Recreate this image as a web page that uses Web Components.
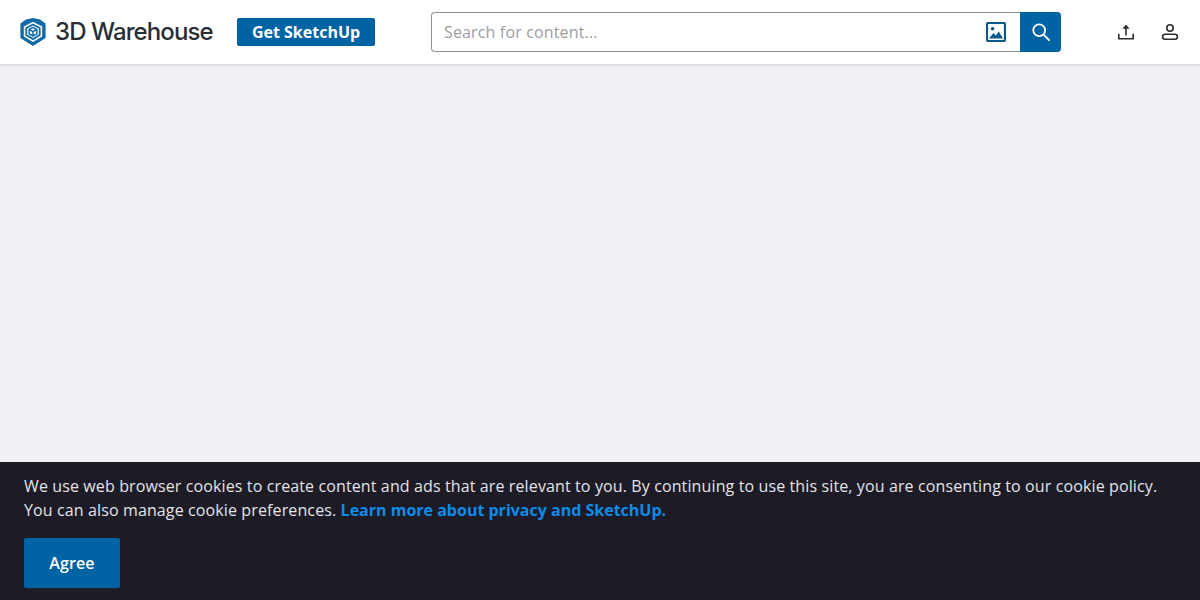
<!DOCTYPE html>
<html lang="en">
<head>
<meta charset="utf-8">
<title>3D Warehouse</title>
<style>
  html, body { margin: 0; height: 100%; }
  body { font-family: "Open Sans", sans-serif; background: #f0f0f5; }
</style>
</head>
<body>
<app-shell>
  <site-header slot="header"></site-header>
  <cookie-bar slot="footer">
    <span slot="policy">We use web browser cookies to create content and ads that are relevant to you. By continuing to use this site, you are consenting to our cookie policy.</span>
    <span slot="manage">You can also manage cookie preferences.</span>
  </cookie-bar>
</app-shell>

<script>
class AppShell extends HTMLElement {
  _shadow = this.attachShadow({ mode: "open" });

  connectedCallback() {
    this._shadow.innerHTML = `
      <style>
        :host {
          display: flex;
          flex-direction: column;
          height: 100vh;
          overflow: hidden;
        }
        main { flex: 1; background: #f0f0f5; }
      </style>
      <slot name="header"></slot>
      <main></main>
      <slot name="footer"></slot>
    `;
  }
}

class LogoMark extends HTMLElement {
  _shadow = this.attachShadow({ mode: "open" });

  connectedCallback() {
    this._shadow.innerHTML = `
      <style>
        :host {
          display: flex;
          align-items: center;
          gap: 9px;
          color: #2a2d33;
          font: 500 24px/1 Inter, sans-serif;
          letter-spacing: -0.9px;
          white-space: nowrap;
        }
        svg { display: block; }
      </style>
      <svg width="26" height="28" viewBox="0 0 26 28">
        <path fill="#0f6aa6" d="M6 1.6 13 0 20 1.6 25.6 5.6V20L13 28 .4 20V5.6Z"/>
        <path fill="#fff" d="M13 3.8 22.2 8.4V18.4L13 24 3.8 18.4V8.4Z"/>
        <path fill="#0f6aa6" d="M13 5.4 20.6 9.4V17.6L13 22.2 5.4 17.6V9.4Z"/>
        <path fill="#fff" d="M13 7.4 18.8 10.6V16.6L13 20 7.2 16.6V10.6Z"/>
        <path fill="none" stroke="#0f6aa6" stroke-width="1.5" stroke-linejoin="round" d="M13 9.4 16.8 11.5V15.8L13 18 9.2 15.8V11.5ZM9.2 11.5 13 13.7 16.8 11.5M13 13.7V18"/>
      </svg>
      <span>3D Warehouse</span>
    `;
  }
}

class SearchBox extends HTMLElement {
  _shadow = this.attachShadow({ mode: "open" });

  connectedCallback() {
    this._shadow.innerHTML = `
      <style>
        :host {
          display: flex;
          flex: none;
          box-sizing: border-box;
          width: 630px;
          height: 40px;
          border: 1px solid #8f8f94;
          border-right: 0;
          border-radius: 4px;
          background: #fff;
        }
        .field {
          flex: 1;
          align-self: center;
          padding-left: 12px;
          color: #9c9ca1;
          font-size: 16px;
          line-height: 24px;
          letter-spacing: .15px;
        }
        .image {
          display: flex;
          align-items: center;
          width: 34px;
        }
        .go {
          display: flex;
          align-items: center;
          justify-content: center;
          width: 41px;
          margin: -1px 0;
          background: #0063a3;
          border-radius: 0 4px 4px 0;
        }
        svg { display: block; }
      </style>
      <div class="field">Search for content...</div>
      <div class="image">
        <svg width="20" height="20" viewBox="0 0 20 20">
          <rect x="1" y="1" width="18" height="18" rx="1.5" fill="none" stroke="#0c5688" stroke-width="2.2"/>
          <circle cx="6.6" cy="6.8" r="1.8" fill="#0c5688"/>
          <path fill="#0c5688" d="M3 16.6 7.4 11 9.8 13.4 12.8 9.6 17 16.6Z"/>
        </svg>
      </div>
      <div class="go">
        <svg width="18" height="18" viewBox="0 0 18 18" fill="none" stroke="#fff" stroke-width="1.8">
          <circle cx="7.2" cy="7.2" r="5.9"/>
          <path stroke-linecap="round" d="M11.6 11.6 17 17"/>
        </svg>
      </div>
    `;
  }
}

class SiteHeader extends HTMLElement {
  _shadow = this.attachShadow({ mode: "open" });

  connectedCallback() {
    this._shadow.innerHTML = `
      <style>
        :host {
          display: flex;
          align-items: center;
          flex: none;
          position: relative;
          box-sizing: border-box;
          height: 65px;
          padding: 0 0 1px 20px;
          background: #fff;
          border-bottom: 1px solid #d9d9de;
          box-shadow: 0 1px 2px rgba(0, 0, 0, .08);
        }
        logo-mark { width: 193px; }
        .get {
          display: flex;
          align-items: center;
          justify-content: center;
          box-sizing: border-box;
          width: 138px;
          height: 28px;
          margin-left: 24px;
          background: #0063a3;
          border-radius: 2px;
          color: #fff;
          font-size: 16px;
          font-weight: 700;
        }
        search-box { margin-left: 56px; }
        .icons {
          display: flex;
          gap: 24px;
          margin-left: 55px;
        }
        svg { display: block; }
      </style>
      <logo-mark></logo-mark>
      <div class="get">Get SketchUp</div>
      <search-box></search-box>
      <div class="icons">
        <svg width="20" height="20" viewBox="0 0 20 20" fill="none" stroke="#2b2b30" stroke-width="1.6">
          <path d="M2.8 11.8V16.8H17.2V11.8"/>
          <path d="M10 13.5V5"/>
          <path fill="#2b2b30" stroke="none" d="M10 2.4 13.6 6.8H6.4Z"/>
        </svg>
        <svg width="20" height="20" viewBox="0 0 20 20" fill="none" stroke="#2b2b30" stroke-width="1.6">
          <circle cx="10" cy="6" r="3.2"/>
          <rect x="2.6" y="12.3" width="14.8" height="4.9" rx="2.45"/>
        </svg>
      </div>
    `;
  }
}

class CookieBar extends HTMLElement {
  _shadow = this.attachShadow({ mode: "open" });

  connectedCallback() {
    this._shadow.innerHTML = `
      <style>
        :host {
          display: block;
          flex: none;
          box-sizing: border-box;
          height: 138px;
          padding: 12px 24px;
          background: #1c1b26;
          color: #e3e3e8;
          font-size: 16px;
          line-height: 24px;
          letter-spacing: .12px;
        }
        .line { display: block; }
        a {
          color: #0d8cea;
          font-weight: 700;
          letter-spacing: 0;
          text-decoration: none;
        }
        button {
          display: block;
          width: 96px;
          height: 50px;
          margin-top: 16px;
          padding: 0;
          border: 0;
          border-radius: 2px;
          background: #0063a3;
          color: #fff;
          font: 600 16px "Open Sans", sans-serif;
          letter-spacing: .1px;
        }
      </style>
      <div class="line"><slot name="policy"></slot></div>
      <div class="line"><slot name="manage"></slot> <a href="#">Learn more about privacy and SketchUp.</a></div>
      <button>Agree</button>
    `;
  }
}

window.customElements.define("app-shell", AppShell);
window.customElements.define("logo-mark", LogoMark);
window.customElements.define("search-box", SearchBox);
window.customElements.define("site-header", SiteHeader);
window.customElements.define("cookie-bar", CookieBar);
</script>
</body>
</html>
